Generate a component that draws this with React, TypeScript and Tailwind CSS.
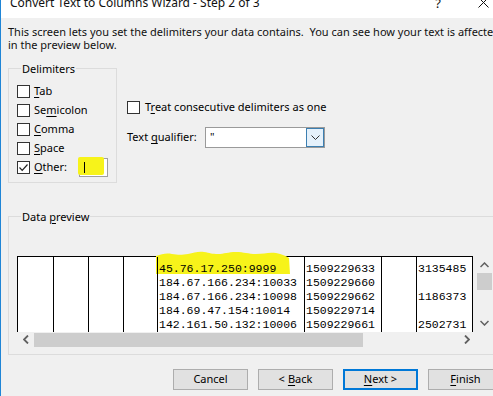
import React from "react";

const U = ({ children }: { children: React.ReactNode }) => (
  <span className="underline underline-offset-2 decoration-1">{children}</span>
);

const Box = ({ checked = false }: { checked?: boolean }) => (
  <div className="w-[13px] h-[13px] border border-[#333333] bg-white flex items-center justify-center shrink-0">
    {checked && (
      <svg width="11" height="11" viewBox="0 0 11 11">
        <path d="M1.5 5.5 L4.2 8.3 L9.5 2.5" fill="none" stroke="#222" strokeWidth="1.2" />
      </svg>
    )}
  </div>
);

const cols: { w: string; rows: string[] }[] = [
  { w: "w-[36px]", rows: [] },
  { w: "w-[35px]", rows: [] },
  { w: "w-[35px]", rows: [] },
  { w: "w-[34px]", rows: [] },
  {
    w: "w-[147px]",
    rows: [
      "45.76.17.250:9999",
      "184.67.166.234:10033",
      "184.67.166.234:10098",
      "184.69.47.154:10014",
      "142.161.50.132:10006",
    ],
  },
  {
    w: "w-[77px]",
    rows: ["1509229633", "1509229660", "1509229662", "1509229714", "1509229661"],
  },
  { w: "w-[35px]", rows: [] },
  { w: "w-[56px]", rows: ["3135485", "", "1186373", "", "2502731"] },
];

export default function App() {
  return (
    <div className="relative w-[493px] h-[396px] overflow-hidden bg-[#f0f0f0] border-l border-[#1f85d6] font-['Noto_Sans',sans-serif] text-[11px] text-black">
      {/* title bar */}
      <div className="h-[18px] bg-white flex overflow-hidden">
        <span className="ml-[9px] mt-[-6px] text-[12px] leading-[18px] whitespace-nowrap text-[#111]">
          Convert Text to Columns Wizard - Step 2 of 3
        </span>
        <span className="ml-auto mt-[-6px] text-[13px] leading-[18px] text-[#111]">?</span>
        <svg className="ml-[37px] mr-[4px] mt-[-3px]" width="11" height="11" viewBox="0 0 11 11">
          <path d="M0.5 0.5 L10.5 10.5 M10.5 0.5 L0.5 10.5" stroke="#111" strokeWidth="1" />
        </svg>
      </div>

      {/* description */}
      <div className="pl-[7px] pt-[7px] leading-[13px] whitespace-nowrap text-[#111]">
        <div>This screen lets you set the delimiters your data contains.&nbsp; You can see how your text is affected</div>
        <div>in the preview below.</div>
      </div>

      {/* middle */}
      <div className="flex mt-[11px]">
        <fieldset className="ml-[7px] w-[109px] h-[121px] border border-[#dcdcdc] pl-[8px]">
          <legend className="ml-[4px] px-[1px] leading-[13px]">Delimiters</legend>
          <div className="mt-[7px] flex flex-col">
            <div className="h-[19px] flex items-center">
              <Box />
              <span className="ml-[4px]"><U>T</U>ab</span>
            </div>
            <div className="h-[19px] flex items-center">
              <Box />
              <span className="ml-[4px]">Se<U>m</U>icolon</span>
            </div>
            <div className="h-[19px] flex items-center">
              <Box />
              <span className="ml-[4px]"><U>C</U>omma</span>
            </div>
            <div className="h-[19px] flex items-center">
              <Box />
              <span className="ml-[4px]"><U>S</U>pace</span>
            </div>
            <div className="h-[19px] flex items-center">
              <Box checked />
              <span className="ml-[4px] w-[45px]"><U>O</U>ther:</span>
              <div className="relative w-[29px] h-[19px] border border-[#a0a0a0] bg-white">
                <div className="absolute left-[-2px] top-[-2px] w-[26px] h-[18px] bg-[#f7f31a] rounded-[2px]" />
                <div className="absolute left-[4px] top-[3px] w-[1px] h-[11px] bg-black" />
              </div>
            </div>
          </div>
        </fieldset>

        <div className="ml-[10px] pt-[36px] flex flex-col">
          <div className="h-[19px] flex items-center">
            <Box />
            <span className="ml-[5px]">T<U>r</U>eat consecutive delimiters as one</span>
          </div>
          <div className="mt-[10px] flex items-center">
            <span className="w-[78px]">Text <U>q</U>ualifier:</span>
            <div className="w-[120px] h-[21px] border border-[#9a9a9a] bg-white flex">
              <span className="pl-[4px] leading-[17px] text-[11px]">"</span>
              <div className="ml-auto w-[18px] h-full border border-[#3c7fb1] bg-[#e5f1fb] flex items-center justify-center">
                <svg width="9" height="6" viewBox="0 0 9 6">
                  <path d="M0.5 0.5 L4.5 4.5 L8.5 0.5" fill="none" stroke="#333" strokeWidth="1" />
                </svg>
              </div>
            </div>
          </div>
        </div>
      </div>

      {/* data preview */}
      <fieldset className="mt-[27px] ml-[7px] w-[500px] h-[145px] border border-[#dcdcdc] pl-[8px]">
        <legend className="ml-[4px] px-[1px] leading-[13px]">Data <U>p</U>review</legend>
        <div className="mt-[33px] flex flex-col">
          <div className="flex h-[76px]">
            <div className="relative flex bg-white border-t border-black h-full">
              <svg className="absolute left-[139px] top-[-6px]" width="134" height="24" viewBox="0 0 134 24">
                <path
                  d="M0 5 C6 3 10 2 16 3 C22 4 26 4 32 3 C38 2 42 0 48 1 C54 2 56 3 62 3 C68 3 72 1 80 1 C88 1 92 3 100 3 C108 3 112 1 120 2 C126 3 130 5 133 7 L134 23 L0 23 Z"
                  fill="#f7f31a"
                />
              </svg>
              {cols.map((c, i) => (
                <div
                  key={i}
                  className={`relative z-10 ${c.w} h-full border-l border-black overflow-hidden pt-[5px] pl-[1px] font-['Liberation_Mono',monospace] text-[11.5px] leading-[14px] whitespace-nowrap`}
                >
                  {c.rows.map((r, j) => (
                    <div key={j} className="h-[14px]">{r}</div>
                  ))}
                </div>
              ))}
              <div className="w-[1px] h-full bg-black" />
            </div>
            <div className="ml-[2px] w-[18px] h-full bg-[#f0f0f0] flex flex-col items-center">
              <svg className="mt-[6px]" width="9" height="6" viewBox="0 0 9 6">
                <path d="M0.5 5 L4.5 1 L8.5 5" fill="none" stroke="#606060" strokeWidth="1.5" />
              </svg>
              <div className="mt-[5px] w-[15px] h-[17px] bg-[#cdcdcd]" />
              <svg className="mt-auto mb-[6px]" width="9" height="6" viewBox="0 0 9 6">
                <path d="M0.5 1 L4.5 5 L8.5 1" fill="none" stroke="#606060" strokeWidth="1.5" />
              </svg>
            </div>
          </div>
          <div className="h-[15px] w-[458px] bg-[#f0f0f0] flex items-center">
            <svg className="ml-[6px]" width="6" height="9" viewBox="0 0 6 9">
              <path d="M5 0.5 L1 4.5 L5 8.5" fill="none" stroke="#606060" strokeWidth="1.8" />
            </svg>
            <div className="ml-[5px] w-[329px] h-[14px] bg-[#cdcdcd]" />
            <svg className="ml-auto mr-[5px]" width="6" height="9" viewBox="0 0 6 9">
              <path d="M1 0.5 L5 4.5 L1 8.5" fill="none" stroke="#606060" strokeWidth="1.8" />
            </svg>
          </div>
        </div>
      </fieldset>

      {/* buttons */}
      <div className="mt-[14px] pl-[172px] flex gap-[10px]">
        <div className="shrink-0 w-[75px] h-[21px] bg-[#e1e1e1] border border-[#adadad] flex items-center justify-center">Cancel</div>
        <div className="shrink-0 w-[75px] h-[21px] bg-[#e1e1e1] border border-[#adadad] flex items-center justify-center">&lt; <span className="ml-[3px]"><U>B</U>ack</span></div>
        <div className="shrink-0 w-[75px] h-[21px] bg-[#e1e1e1] border-2 border-[#0078d7] flex items-center justify-center"><U>N</U>ext &gt;</div>
        <div className="shrink-0 w-[75px] h-[21px] bg-[#e1e1e1] border border-[#adadad] flex items-center justify-center"><U>F</U>inish</div>
      </div>
    </div>
  );
}
